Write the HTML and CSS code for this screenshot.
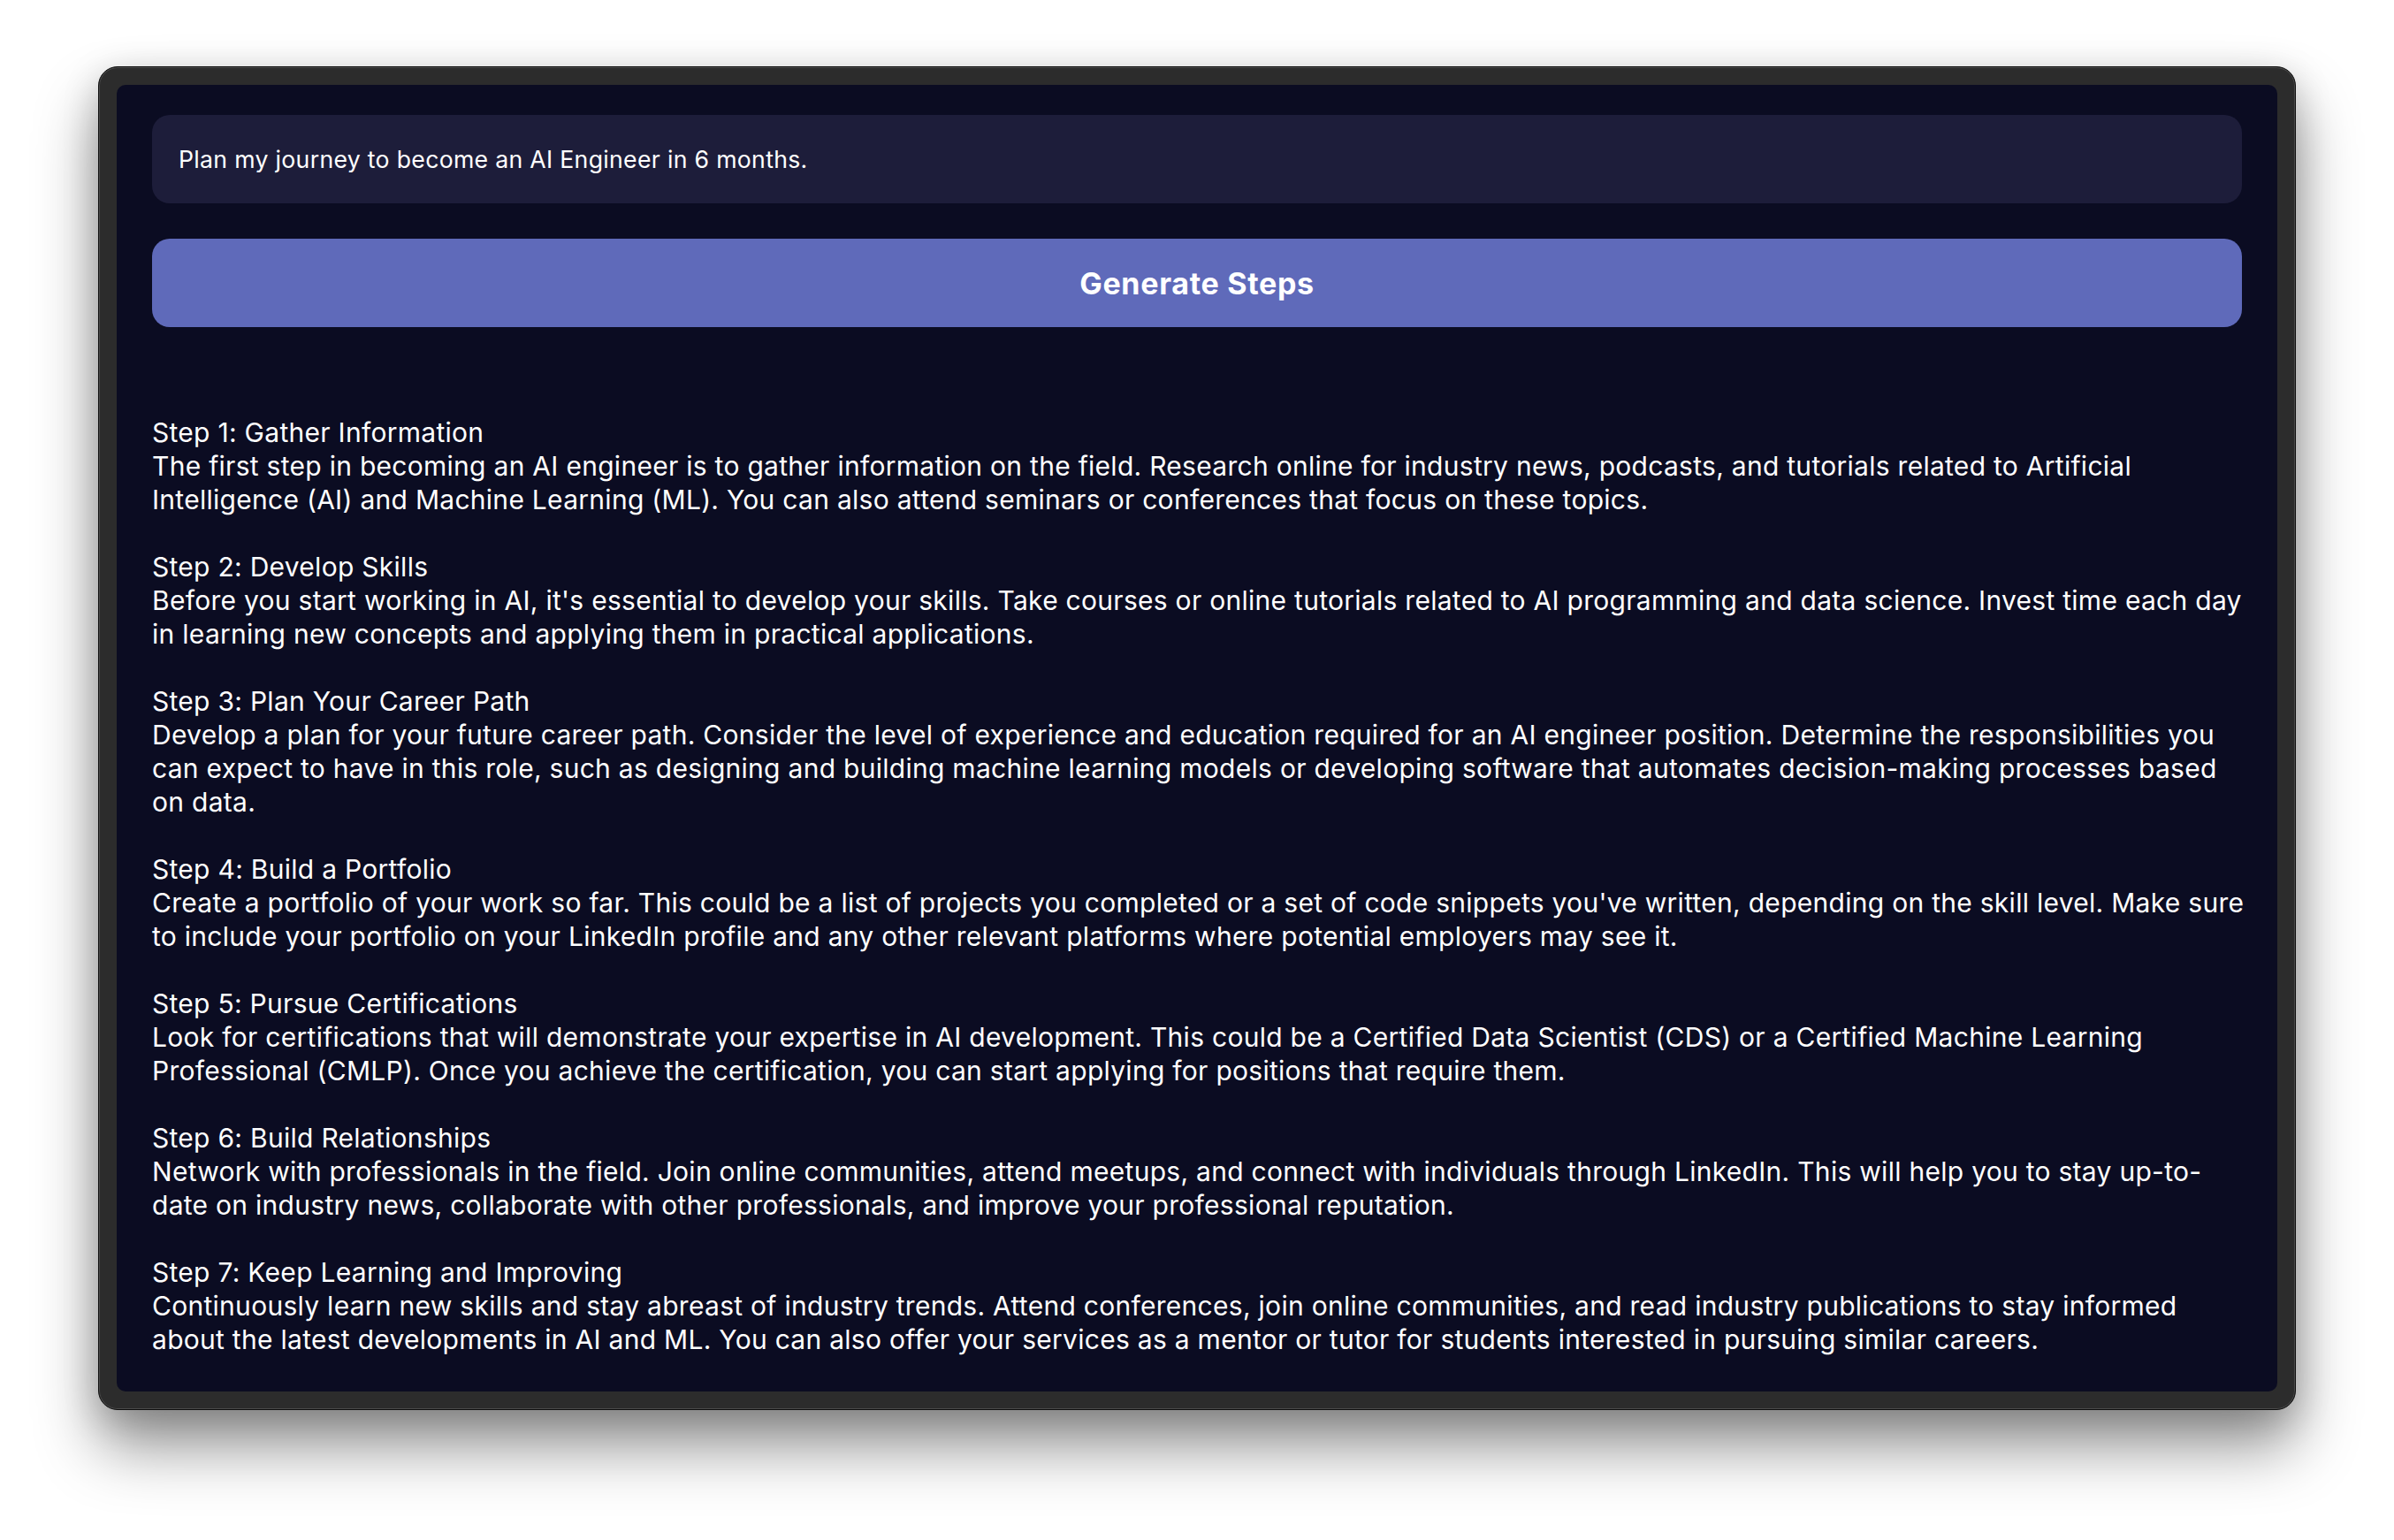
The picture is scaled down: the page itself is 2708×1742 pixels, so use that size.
FILE: index.html
```html
<!DOCTYPE html>
<html lang="en">
<head>
<meta charset="utf-8">
<title>AI Engineer Journey</title>
<link rel="stylesheet" href="styles.css">
</head>
<body>
<div class="window">
  <main class="panel">
    <div class="prompt">Plan my journey to become an AI Engineer in 6 months.</div>
    <button class="generate" type="button">Generate Steps</button>
    <div class="result">
      <p class="step">Step 1: Gather Information<br>The first step in becoming an AI engineer is to gather information on the field. Research online for industry news, podcasts, and tutorials related to Artificial<br>Intelligence (AI) and Machine Learning (ML). You can also attend seminars or conferences that focus on these topics.</p>
      <p class="step">Step 2: Develop Skills<br>Before you start working in AI, it's essential to develop your skills. Take courses or online tutorials related to AI programming and data science. Invest time each day<br>in learning new concepts and applying them in practical applications.</p>
      <p class="step">Step 3: Plan Your Career Path<br>Develop a plan for your future career path. Consider the level of experience and education required for an AI engineer position. Determine the responsibilities you<br>can expect to have in this role, such as designing and building machine learning models or developing software that automates decision-making processes based<br>on data.</p>
      <p class="step">Step 4: Build a Portfolio<br>Create a portfolio of your work so far. This could be a list of projects you completed or a set of code snippets you've written, depending on the skill level. Make sure<br>to include your portfolio on your LinkedIn profile and any other relevant platforms where potential employers may see it.</p>
      <p class="step">Step 5: Pursue Certifications<br>Look for certifications that will demonstrate your expertise in AI development. This could be a Certified Data Scientist (CDS) or a Certified Machine Learning<br>Professional (CMLP). Once you achieve the certification, you can start applying for positions that require them.</p>
      <p class="step">Step 6: Build Relationships<br>Network with professionals in the field. Join online communities, attend meetups, and connect with individuals through LinkedIn. This will help you to stay up-to-<br>date on industry news, collaborate with other professionals, and improve your professional reputation.</p>
      <p class="step">Step 7: Keep Learning and Improving<br>Continuously learn new skills and stay abreast of industry trends. Attend conferences, join online communities, and read industry publications to stay informed<br>about the latest developments in AI and ML. You can also offer your services as a mentor or tutor for students interested in pursuing similar careers.</p>
    </div>
  </main>
</div>
</body>
</html>
```

FILE: styles.css
```css
html, body {
  margin: 0;
  padding: 0;
  background: #ffffff;
}

body {
  font-family: Inter, "Noto Sans", "Liberation Sans", sans-serif;
  padding: 75px 111px 148px;
}

.window {
  background: #2c2c2c;
  border: 1px solid #0e0e0e;
  border-radius: 22px;
  padding: 20px;
  box-shadow:
    inset 0 0 0 1px #4a4a4a,
    0 42px 70px rgba(0, 0, 0, 0.42),
    0 10px 40px rgba(0, 0, 0, 0.18);
}

.panel {
  background: #0b0c22;
  border-radius: 10px;
  padding: 34px 40px 40px;
}

.prompt {
  height: 100px;
  box-sizing: border-box;
  padding: 0 30px;
  display: flex;
  align-items: center;
  background: #1d1d3a;
  border-radius: 20px;
  color: #ffffff;
  font-size: 26.67px;
  letter-spacing: 0.3px;
}

.generate {
  display: block;
  width: 100%;
  height: 100px;
  margin-top: 40px;
  border: 0;
  border-radius: 20px;
  background: #5f6aba;
  color: #ffffff;
  font-family: Inter, "Noto Sans", "Liberation Sans", sans-serif;
  font-size: 34px;
  font-weight: 700;
  letter-spacing: 0.7px;
}

.result {
  margin-top: 100px;
  color: #ffffff;
  font-size: 30px;
  line-height: 38px;
  letter-spacing: 0.28px;
  white-space: nowrap;
}

.step {
  margin: 0 0 38px;
}

.step:last-child {
  margin-bottom: 0;
}
```
